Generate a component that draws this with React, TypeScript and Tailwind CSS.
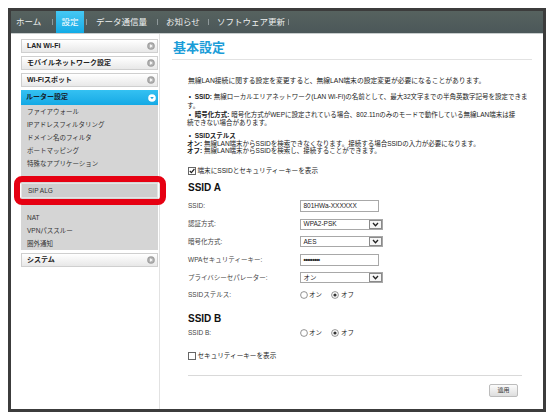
import React from "react";

const Sep = () => <span className="w-px h-[6px] bg-[#8f999b] shrink-0" />;

function Arrow({ active }: { active?: boolean }) {
  if (active) {
    return (
      <svg width="8" height="8" viewBox="0 0 8 8">
        <circle cx="4" cy="4" r="3.8" fill="#ffffff" />
        <path d="M2.2 3.1 L5.8 3.1 L4 5.3Z" fill="#1aa9e3" />
      </svg>
    );
  }
  return (
    <svg width="8" height="8" viewBox="0 0 8 8">
      <circle cx="4" cy="4" r="3.8" fill="#9d9d9d" />
      <circle cx="4" cy="4" r="2.6" fill="#b8b8b8" />
      <path d="M3.1 2.3 L5.6 4 L3.1 5.7Z" fill="#ffffff" />
    </svg>
  );
}

function SideBtn({ label }: { label: string }) {
  return (
    <div className="h-[14px] mt-[3px] flex items-center justify-between pl-[5px] pr-[2px] border border-[#cfcfcf] bg-gradient-to-b from-[#ffffff] to-[#e8e8e8] text-[7px] font-bold text-[#222] whitespace-nowrap">
      <span>{label}</span>
      <Arrow />
    </div>
  );
}

function Sub({ label }: { label: string }) {
  return <div className="h-[13px] flex items-center pl-[6px] text-[6.5px] text-[#333] whitespace-nowrap">{label}</div>;
}

function Check({ checked }: { checked?: boolean }) {
  return (
    <svg width="8" height="8" viewBox="0 0 8 8" className="shrink-0">
      <rect x="0.5" y="0.5" width="7" height="7" fill="#fff" stroke="#666" />
      {checked && <path d="M1.8 4 L3.4 5.7 L6.4 2" fill="none" stroke="#222" strokeWidth="1.2" />}
    </svg>
  );
}

function Radio({ checked }: { checked?: boolean }) {
  return (
    <svg width="8" height="8" viewBox="0 0 8 8" className="shrink-0">
      <circle cx="4" cy="4" r="3.4" fill="#fff" stroke="#777" strokeWidth="0.8" />
      {checked && <circle cx="4" cy="4" r="1.6" fill="#333" />}
    </svg>
  );
}

function Row({ label, children }: { label: string; children: React.ReactNode }) {
  return (
    <div className="h-[17.8px] flex items-center">
      <div className="w-[111.5px] text-[6.5px] text-[#444] whitespace-nowrap">{label}</div>
      {children}
    </div>
  );
}

function TextBox({ value, bold }: { value: string; bold?: boolean }) {
  return (
    <div className={`w-[79px] h-[12px] border border-[#a8a8a8] bg-white flex items-center pl-[3px] text-[6.5px] text-[#222] ${bold ? "font-bold tracking-[-0.5px]" : ""}`}>
      {value}
    </div>
  );
}

function SelectBox({ value }: { value: string }) {
  return (
    <div className="w-[83.5px] h-[11px] border border-[#a8a8a8] bg-white flex items-center text-[6.5px] text-[#222]">
      <span className="flex-1 pl-[3px]">{value}</span>
      <span className="w-[13px] h-[9px] mr-[0.5px] border border-[#8a8a8a] bg-[#f6f6f6] flex items-center justify-center">
        <svg width="7" height="5" viewBox="0 0 7 5">
          <path d="M1 1 L3.5 3.8 L6 1" fill="none" stroke="#222" strokeWidth="1.3" />
        </svg>
      </span>
    </div>
  );
}

function Radios() {
  return (
    <div className="flex items-center text-[6.5px] text-[#222]">
      <Radio />
      <span className="ml-[1.5px] w-[22px]">オン</span>
      <Radio checked />
      <span className="ml-[2px]">オフ</span>
    </div>
  );
}

export default function App() {
  return (
    <div className="w-[552px] h-[420px] bg-white pt-[8px] pl-[8px] font-[family-name:'Liberation_Sans','Noto_Sans_CJK_JP',sans-serif]">
      <div className="w-[538px] h-[404px] border-[3px] border-[#3c3c3c] flex flex-col bg-white">
        <nav className="h-[23px] shrink-0 flex items-center bg-gradient-to-b from-[#56625f] to-[#4b5759] border-b border-[#c8cdcd] text-[8.5px] text-[#eef0f0] whitespace-nowrap">
          <div className="w-[41px] shrink-0 pl-[5px]">ホーム</div>
          <Sep />
          <div className="w-[3px] shrink-0" />
          <div className="w-[28px] shrink-0 self-stretch flex items-center justify-center bg-gradient-to-b from-[#45c8f3] to-[#0fabe6] text-white">
            設定
          </div>
          <div className="w-[2px] shrink-0" />
          <Sep />
          <div className="w-[70px] shrink-0 pl-[9px]">データ通信量</div>
          <Sep />
          <div className="w-[50px] shrink-0 pl-[8px]">お知らせ</div>
          <Sep />
          <div className="w-[79px] shrink-0 pl-[8px]">ソフトウェア更新</div>
          <Sep />
        </nav>
        <div className="flex flex-1">
          <aside className="w-[149px] shrink-0 border-r border-[#e2e2e2] pl-[10px] pr-[1px] pt-[2px]">
            <SideBtn label="LAN Wi-Fi" />
            <SideBtn label="モバイルネットワーク設定" />
            <SideBtn label="Wi-Fiスポット" />
            <div className="h-[15px] mt-[3px] flex items-center justify-between pl-[5px] pr-[2px] bg-gradient-to-b from-[#34c1f2] to-[#12a9e5] text-[7px] font-bold text-[#16202a]">
              <span>ルーター設定</span>
              <Arrow active />
            </div>
            <div className="bg-[#d5d5d5]">
              <Sub label="ファイアウォール" />
              <Sub label="IPアドレスフィルタリング" />
              <Sub label="ドメイン名のフィルタ" />
              <Sub label="ポートマッピング" />
              <Sub label="特殊なアプリケーション" />
              <div className="h-[13px]" />
              <div className="relative h-[15px] flex items-center pl-[6px] bg-[#cecece] border border-[#e4e4e4] text-[6.5px] text-[#333]">
                SIP ALG
                <div className="absolute left-[-8px] right-[-9px] top-[-8px] bottom-[-8px] border-[6px] border-[#e60012] rounded-[8px]" />
              </div>
              <div className="h-[13px]" />
              <Sub label="NAT" />
              <Sub label="VPNパススルー" />
              <Sub label="圏外通知" />
            </div>
            <SideBtn label="システム" />
          </aside>
          <main className="flex-1 text-[#222]">
            <div className="ml-[12px] mr-[11px] pt-[6px] pb-[3px] border-b border-[#e2e2e2]">
              <h1 className="h-[16px] leading-[16px] text-[13px] font-bold text-[#1b9dd8] pl-[1px]">基本設定</h1>
            </div>
            <div className="pl-[28px]">
              <p className="mt-[15.5px] leading-[9px] text-[6.8px] whitespace-nowrap">
                無線LAN接続に関する設定を変更すると、無線LAN端末の設定変更が必要になることがあります。
              </p>
              <p className="mt-[7px] leading-[9px] text-[6.5px] whitespace-nowrap -ml-[1px]">
                &nbsp;•&nbsp;&nbsp;<b>SSID:</b> 無線ローカルエリアネットワーク(LAN Wi-Fi)の名前として、最大32文字までの半角英数字記号を設定できま
                <br />
                す。
              </p>
              <p className="mt-[1px] leading-[8.5px] text-[6.5px] whitespace-nowrap -ml-[1px]">
                &nbsp;•&nbsp;&nbsp;<b>暗号化方式:</b> 暗号化方式がWEPに設定されている場合、802.11nのみのモードで動作している無線LAN端末は接
                <br />
                続できない場合があります。
              </p>
              <p className="mt-[4.5px] leading-[7.7px] text-[6.5px] whitespace-nowrap -ml-[1px]">
                &nbsp;•&nbsp;&nbsp;<b>SSIDステルス</b>
                <br />
                <b>オン:</b> 無線LAN端末からSSIDを検索できなくなります。接続する場合SSIDの入力が必要になります。
                <br />
                <b>オフ:</b> 無線LAN端末からSSIDを検索し、接続することができます。
              </p>
              <div className="mt-[11.5px] h-[9px] flex items-center gap-[1.5px] text-[6.6px]">
                <Check checked />
                <span>端末にSSIDとセキュリティーキーを表示</span>
              </div>
              <h2 className="mt-[6px] leading-[12px] text-[10px] font-bold text-[#111]">SSID A</h2>
              <div className="mt-[3.8px]">
                <Row label="SSID:">
                  <TextBox value="801HWa-XXXXXX" />
                </Row>
                <Row label="認証方式:">
                  <SelectBox value="WPA2-PSK" />
                </Row>
                <Row label="暗号化方式:">
                  <SelectBox value="AES" />
                </Row>
                <Row label="WPAセキュリティーキー:">
                  <TextBox value="•••••••••" bold />
                </Row>
                <Row label="プライバシーセパレーター:">
                  <SelectBox value="オン" />
                </Row>
                <Row label="SSIDステルス:">
                  <Radios />
                </Row>
              </div>
              <h2 className="mt-[8.8px] leading-[12px] text-[10px] font-bold text-[#111]">SSID B</h2>
              <div className="mt-[2.3px] h-[12px] flex items-center">
                <div className="w-[111.5px] text-[6.5px] text-[#444]">SSID B:</div>
                <Radios />
              </div>
              <div className="mt-[11.8px] h-[9px] flex items-center gap-[1.5px] text-[6.6px]">
                <Check />
                <span>セキュリティーキーを表示</span>
              </div>
              <div className="mt-[15px] mr-[21px] border-t border-[#d9d9d9]" />
              <div className="mt-[8px] mr-[25px] flex justify-end">
                <div className="w-[29px] h-[13px] border border-[#bcbcbc] rounded-[2px] bg-gradient-to-b from-[#fbfbfb] to-[#dedede] flex items-center justify-center text-[6px] text-[#333]">
                  適用
                </div>
              </div>
            </div>
          </main>
        </div>
      </div>
    </div>
  );
}
